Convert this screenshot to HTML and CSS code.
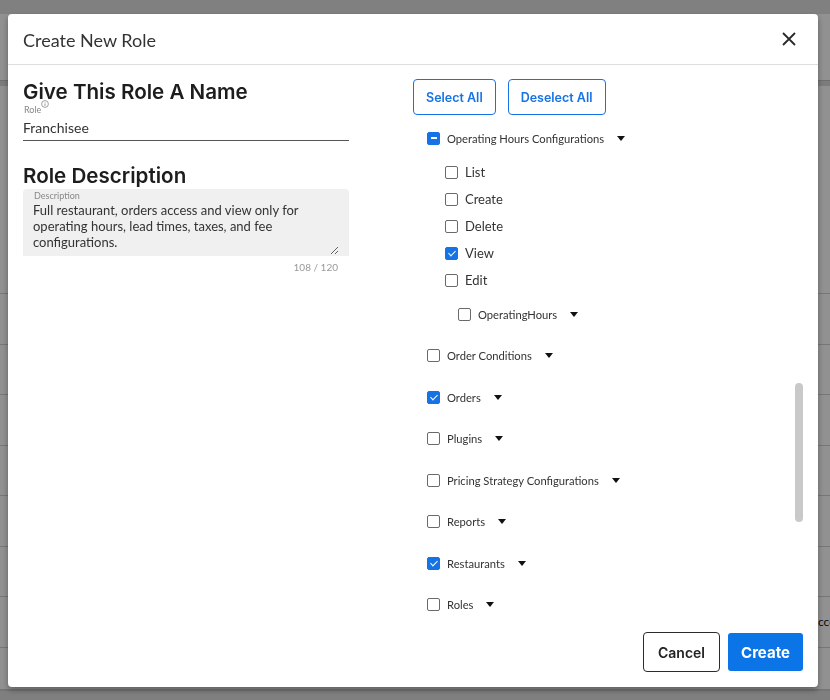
FILE: index.html
```html
<!DOCTYPE html>
<html lang="en">
<head>
    <meta charset="UTF-8">
    <meta name="viewport" content="width=device-width, initial-scale=1.0">
    <title>Create New Role</title>
    <link rel="stylesheet" href="styles.css">
</head>
<body>
    <!-- roles table behind the dialog -->
    <div class="page">
        <div class="topbar"></div>
        <div class="page-head"></div>
        <div class="page-band"></div>
        <div class="page-space"></div>
        <div class="page-row"></div>
        <div class="page-row"></div>
        <div class="page-row"></div>
        <div class="page-row"></div>
        <div class="page-row"></div>
        <div class="page-row"></div>
        <div class="page-row"><span>Access</span></div>
        <div class="page-last"></div>
        <div class="page-foot"></div>
    </div>

    <div class="overlay">
        <div class="modal">
            <div class="modal-header">
                <h1>Create New Role</h1>
                <button class="close" type="button" aria-label="Close">
                    <svg width="14" height="14" viewBox="0 0 14 14"><path d="M1 1 L13 13 M13 1 L1 13" stroke="#2a2a2a" stroke-width="1.8" fill="none"/></svg>
                </button>
            </div>

            <div class="modal-body">
                <div class="col-left">
                    <h2>Give This Role A Name</h2>
                    <div class="field">
                        <label class="field-label" for="roleName">Role<svg class="info" width="8" height="8" viewBox="0 0 8 8"><circle cx="4" cy="4" r="3.4" fill="none" stroke="#888" stroke-width="0.8"/><path d="M4 3.4 V6 M4 2 V2.6" stroke="#888" stroke-width="0.8"/></svg></label>
                        <input class="field-input" id="roleName" type="text" value="Franchisee">
                    </div>

                    <h2 class="desc-title">Role Description</h2>
                    <div class="desc-box">
                        <label class="desc-label" for="roleDesc">Description</label>
                        <textarea id="roleDesc">Full restaurant, orders access and view only for operating hours, lead times, taxes, and fee configurations.</textarea>
                    </div>
                    <div class="counter">108 / 120</div>
                </div>

                <div class="col-right">
                    <div class="select-actions">
                        <button class="btn-outline" type="button">Select All</button>
                        <button class="btn-outline" type="button">Deselect All</button>
                    </div>

                    <ul class="perm-tree">
                        <li class="perm">
                            <div class="perm-row"><span class="box partial"></span><span class="perm-name">Operating Hours Configurations</span><span class="caret"></span></div>
                            <ul class="perm-children">
                                <li class="perm-row action"><span class="box"></span>List</li>
                                <li class="perm-row action"><span class="box"></span>Create</li>
                                <li class="perm-row action"><span class="box"></span>Delete</li>
                                <li class="perm-row action"><span class="box checked"></span>View</li>
                                <li class="perm-row action"><span class="box"></span>Edit</li>
                                <li class="perm-row nested"><span class="box"></span><span class="perm-name">OperatingHours</span><span class="caret"></span></li>
                            </ul>
                        </li>
                        <li class="perm"><div class="perm-row"><span class="box"></span><span class="perm-name">Order Conditions</span><span class="caret"></span></div></li>
                        <li class="perm"><div class="perm-row"><span class="box checked"></span><span class="perm-name">Orders</span><span class="caret"></span></div></li>
                        <li class="perm"><div class="perm-row"><span class="box"></span><span class="perm-name">Plugins</span><span class="caret"></span></div></li>
                        <li class="perm"><div class="perm-row"><span class="box"></span><span class="perm-name">Pricing Strategy Configurations</span><span class="caret"></span></div></li>
                        <li class="perm"><div class="perm-row"><span class="box"></span><span class="perm-name">Reports</span><span class="caret"></span></div></li>
                        <li class="perm"><div class="perm-row"><span class="box checked"></span><span class="perm-name">Restaurants</span><span class="caret"></span></div></li>
                        <li class="perm"><div class="perm-row"><span class="box"></span><span class="perm-name">Roles</span><span class="caret"></span></div></li>
                    </ul>
                </div>

                <div class="scroll-thumb"></div>
            </div>

            <div class="modal-footer">
                <button class="btn-cancel" type="button">Cancel</button>
                <button class="btn-primary" type="button">Create</button>
            </div>
        </div>
    </div>
</body>
</html>
```

FILE: styles.css
```css
* { box-sizing: border-box; }
body {
    margin: 0;
    font-family: Lato, "Noto Sans", sans-serif;
    color: #333;
    background: #fff;
    overflow: hidden;
}
ul { list-style: none; margin: 0; padding: 0; }
button { font-family: Inter, "Liberation Sans", sans-serif; cursor: pointer; }

/* page behind the overlay */
.page { height: 700px; }
.topbar { height: 14px; background: #e2e2e2; }
.page-head { height: 67px; border-bottom: 1px solid #c4c4c4; }
.page-band { height: 5px; background: #dadada; }
.page-space { height: 208px; border-bottom: 1px solid #d2d2d2; }
.page-row {
    height: 50.5px;
    border-bottom: 1px solid #d2d2d2;
    display: flex;
    align-items: center;
    padding-left: 810px;
    font-size: 12px;
    color: #111;
    white-space: nowrap;
}
.page-last { height: 43px; border-bottom: 2px solid #cfcfcf; }
.page-foot { height: 20px; background: #e0e0e0; }

.overlay {
    position: fixed;
    inset: 0;
    background: rgba(0, 0, 0, 0.43);
    padding: 14px 12px 13px 8px;
    display: flex;
}
.modal {
    width: 810px;
    height: 673px;
    background: #fff;
    border-radius: 4px;
    box-shadow: 0 3px 6px rgba(0, 0, 0, 0.35);
    display: flex;
    flex-direction: column;
    overflow: hidden;
}

.modal-header {
    height: 51px;
    flex: none;
    display: flex;
    align-items: center;
    justify-content: space-between;
    padding: 0 22px 0 15px;
    border-bottom: 1px solid #dedede;
}
.modal-header h1 {
    margin: 0;
    font-size: 18px;
    font-weight: 400;
    color: #333;
    padding-top: 1px;
}
.close { background: none; border: none; padding: 0; display: flex; }

.modal-body {
    flex: 1;
    position: relative;
    display: grid;
    grid-template-columns: 390px 1fr;
    padding: 14px 15px 0;
    overflow: hidden;
}

/* left column: name + description */
.col-left { width: 326px; }
h2 {
    margin: 0;
    font-family: Inter, "Liberation Sans", sans-serif;
    font-size: 20.6px;
    font-weight: 600;
    line-height: 26px;
    color: #1d1d1d;
}
.field { padding-left: 1px; }
.field-label {
    display: block;
    font-size: 9px;
    line-height: 10px;
    color: #888;
}
.info { vertical-align: top; margin-top: -5px; }
.field-input {
    display: block;
    height: 26px;
    border: none;
    border-bottom: 1px solid #555;
    padding: 0;
    font-family: Lato, sans-serif;
    font-size: 14px;
    color: #333;
    outline: none;
    margin-left: -1px;
    width: 326px;
}
.desc-title { margin-top: 22px; }
.desc-box {
    background: #f0f0f0;
    border-radius: 4px 4px 0 0;
    height: 67px;
    padding: 1px 10px 0 10px;
}
.desc-label {
    display: block;
    font-size: 9px;
    line-height: 12px;
    color: #888;
    padding-left: 1px;
}
.desc-box textarea {
    display: block;
    width: 100%;
    height: 53px;
    border: none;
    background: transparent;
    padding: 0;
    font-family: Lato, sans-serif;
    font-size: 13px;
    line-height: 16px;
    color: #333;
    resize: vertical;
    overflow: hidden;
    outline: none;
}
.counter {
    text-align: right;
    font-size: 10px;
    line-height: 12px;
    color: #999;
    padding-right: 11px;
    margin-top: 5px;
}

/* right column: permission tree */
.select-actions { display: flex; gap: 12px; }
.btn-outline {
    height: 36px;
    padding: 0 12px;
    background: #fff;
    border: 1px solid #1673e6;
    border-radius: 4px;
    color: #1673e6;
    font-size: 12.5px;
    font-weight: 600;
}
.perm-tree { margin-top: 13px; padding-left: 14px; }
.perm { margin-bottom: 21.5px; }
.perm-row {
    display: flex;
    align-items: center;
    height: 20px;
    font-size: 11.2px;
    color: #333;
}
.perm-children { margin-top: 14px; padding-left: 18px; }
.perm-row.action { font-size: 13px; margin-bottom: 7px; }
.perm-row.action:nth-child(5) { margin-bottom: 0; }
.perm-row.nested { margin-top: 14px; padding-left: 13px; }
.caret {
    width: 0;
    height: 0;
    margin-left: 13px;
    border-left: 4.5px solid transparent;
    border-right: 4.5px solid transparent;
    border-top: 5px solid #111;
}
.box {
    width: 13px;
    height: 13px;
    flex: none;
    margin-right: 7px;
    border: 1px solid #6a6a6a;
    border-radius: 2px;
    position: relative;
}
.box.checked, .box.partial { background: #1673e6; border-color: #1673e6; }
.box.checked::after {
    content: "";
    position: absolute;
    left: 3.5px;
    top: 1.5px;
    width: 3px;
    height: 6px;
    border-right: 1.5px solid #fff;
    border-bottom: 1.5px solid #fff;
    transform: rotate(45deg);
}
.box.partial::after {
    content: "";
    position: absolute;
    left: 2.5px;
    top: 4.5px;
    width: 6px;
    height: 2px;
    background: #fff;
}

.scroll-thumb {
    position: absolute;
    right: 15px;
    top: 318px;
    width: 8px;
    height: 139px;
    border-radius: 4px;
    background: #c9c9c9;
}

.modal-footer {
    flex: none;
    display: flex;
    justify-content: flex-end;
    align-items: center;
    gap: 8px;
    padding: 12px 15px 15px;
}
.btn-cancel {
    width: 77px;
    height: 40px;
    background: #fff;
    border: 1px solid #2b2b2b;
    border-radius: 4px;
    color: #222;
    font-size: 14px;
    font-weight: 600;
}
.btn-primary {
    width: 75px;
    height: 38px;
    background: #0b74e6;
    border: none;
    border-radius: 3px;
    color: #fff;
    font-size: 15px;
    font-weight: 700;
}
```
